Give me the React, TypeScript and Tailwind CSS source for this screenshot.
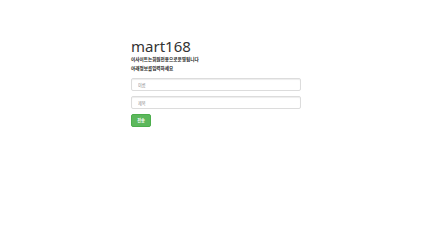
export default function App() {
  return (
    <div className="min-h-screen w-full bg-white" style={{ fontFamily: '"Noto Sans", "Noto Sans CJK KR", sans-serif' }}>
      <div className="mx-auto flex w-[170px] flex-col pt-[37px]">
        <h1 className="text-[15px] leading-[18px] font-normal text-[#333]">mart168</h1>
        <p className="text-[4.6px] leading-[9px] font-bold text-[#222] font-['Noto_Sans_CJK_KR',sans-serif]">
          이사이트는회원전용으로운영됩니다
          <br />
          아래정보를입력하세요
        </p>
        <input
          type="text"
          placeholder="이름"
          className="mt-[5px] h-[13px] w-full rounded-[2px] border border-[#dcdcdc] px-[6px] text-[4.2px] text-[#555] shadow-[inset_0_1px_1px_rgba(0,0,0,0.075)] placeholder:text-[#888] outline-none font-['Noto_Sans_CJK_KR',sans-serif]"
        />
        <input
          type="text"
          placeholder="제목"
          className="mt-[5px] h-[13px] w-full rounded-[2px] border border-[#dcdcdc] px-[6px] text-[4.2px] text-[#555] shadow-[inset_0_1px_1px_rgba(0,0,0,0.075)] placeholder:text-[#888] outline-none font-['Noto_Sans_CJK_KR',sans-serif]"
        />
        <div className="mt-[5px] flex">
          <button
            type="button"
            className="flex h-[13px] w-[20px] items-center justify-center rounded-[2px] border border-[#4cae4c] bg-[#5cb85c] text-[4.2px] leading-none font-bold text-white font-['Noto_Sans_CJK_KR',sans-serif]"
          >
            전송
          </button>
        </div>
      </div>
    </div>
  );
}
